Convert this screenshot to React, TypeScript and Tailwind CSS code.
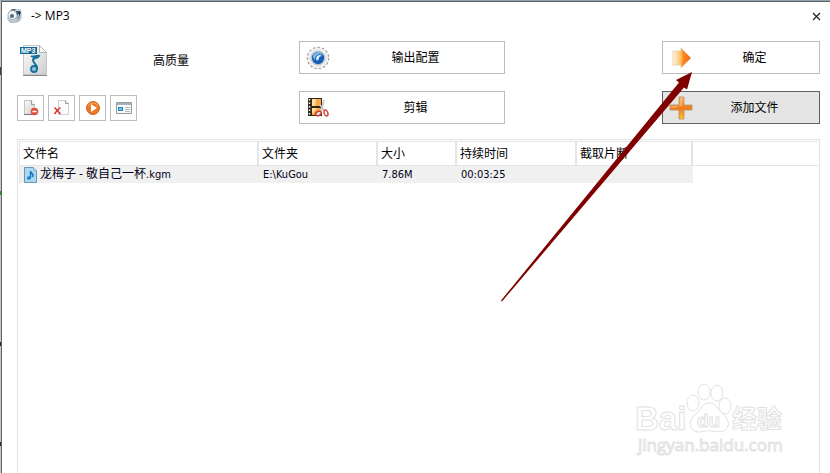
import type { ReactNode } from "react";

const files = [
  { name: "龙梅子 - 敬自己一杯", ext: ".kgm", folder: "E:\\KuGou", size: "7.86M", duration: "00:03:25", clip: "" }
];

function AppIcon() {
  return (
    <svg width="16" height="16" viewBox="0 0 16 16" aria-hidden="true">
      <path d="M0 11 2 4l4-3 8 0 1 9-2 3-4 2H3z" fill="#c3cdd5" />
      <path d="M3 3 5 1h4L7 4z" fill="#55636d" />
      <circle cx="5.500" cy="7" r="4.500" fill="#eef3f6" stroke="#8797a2" strokeWidth=".8" />
      <circle cx="5" cy="8" r="2" fill="#4a6a84" />
      <path d="M9 3h4l-1 3-2 1z" fill="#3b566b" />
      <path d="M10 9l3-3v4l-3 3z" fill="#8fa3b1" />
      <path d="m12 3 2 1-2 5z" fill="#18344c" />
      <path d="M1 12c3 3 8 3 12 0" fill="none" stroke="#a9b6bf" />
    </svg>
  );
}

function Mp3Icon() {
  return (
    <svg width="28" height="32" viewBox="0 0 28 32" aria-hidden="true">
      <defs>
        <linearGradient id="paper" x1="0" y1="0" x2="1" y2="1">
          <stop stopColor="#ffffff" />
          <stop offset="1" stopColor="#cdcdcd" />
        </linearGradient>
      </defs>
      <path d="M3.500.5h16l7 7v22h-23z" fill="url(#paper)" stroke="#c6c6c6" />
      <path d="M3 30.500h24" stroke="#8a8a8a" />
      <path d="M19.500.5v7h7z" fill="#fff" stroke="#b0b0b0" />
      <path d="M11 11c3 2 5-1 8 0-1 3-6 1-6 4 0 3 5 5 4 9" fill="none" stroke="#176f9c" strokeWidth="2" />
      <ellipse cx="14" cy="24" rx="3" ry="3" fill="#8cc5e0" stroke="#176f9c" strokeWidth="1.800" />
      <path d="M0 2h17v7H0z" fill="#0f6a98" />
      <text x="1" y="8" fill="#fff" fontSize="7" fontWeight="700" fontFamily="Liberation Sans, sans-serif">MP3</text>
    </svg>
  );
}

function RemoveIcon() {
  return (
    <svg width="18" height="18" viewBox="0 0 18 18" aria-hidden="true">
      <defs>
        <linearGradient id="sheet" x1="0" y1="0" x2="1" y2="1">
          <stop stopColor="#fafafa" />
          <stop offset="1" stopColor="#cfcfcf" />
        </linearGradient>
      </defs>
      <path d="M2.500 1.500h7l3 4v10h-10z" fill="url(#sheet)" stroke="#c4c4c4" />
      <path d="M2 15.500h9" stroke="#777" />
      <path d="M9.500 1.500v4h3" fill="#fff" stroke="#999" />
      <circle cx="12.500" cy="12.500" r="3.800" fill="#e0503f" />
      <path d="M10.500 12.500h4" stroke="#fff" strokeWidth="1.500" />
    </svg>
  );
}

function ClearIcon() {
  return (
    <svg width="18" height="18" viewBox="0 0 18 18" aria-hidden="true">
      <path d="M5.500 1.500h7l3 3v11h-10z" fill="#fdfdfd" stroke="#d0d0d0" />
      <path d="M12.500 1.500v3h3" fill="none" stroke="#999" />
      <path d="m1.500 8.500 6 6.500M7.500 8.500c-3 2-4 4-6 6.500" fill="none" stroke="#dc3329" strokeWidth="1.500" />
    </svg>
  );
}

function PlayIcon() {
  return (
    <svg width="18" height="18" viewBox="0 0 18 18" aria-hidden="true">
      <circle cx="9" cy="9" r="6.500" fill="#ee7821" stroke="#c9682a" />
      <path d="M4 7c2-4 8-4 10 0" fill="none" stroke="#ffac62" />
      <path d="m7 5 6 4-6 4z" fill="#fff" />
    </svg>
  );
}

function InfoIcon() {
  return (
    <svg width="18" height="18" viewBox="0 0 18 18" aria-hidden="true">
      <path d="M1.500 3.500h15v11h-15z" fill="#f7f8f8" stroke="#929da0" />
      <path d="M2 4h14v2H2z" fill="#a6b2b8" />
      <path d="M3 8h5v4H3z" fill="#2383bd" />
      <path d="M4 9h3v2H4z" fill="#72c8e8" />
      <path d="M10 8.500h5M10 10.500h5M10 12.500h5" stroke="#b3bdc2" />
    </svg>
  );
}

function GearIcon() {
  return (
    <svg width="24" height="24" viewBox="0 0 24 24" aria-hidden="true">
      <circle cx="12" cy="12" r="10" fill="none" stroke="#9a9a9a" strokeWidth="2.500" strokeDasharray="2.400 1.800" />
      <circle cx="12" cy="12" r="9.300" fill="#f4f4f4" stroke="#efefef" strokeWidth="2" />
      <circle cx="12" cy="12" r="7" fill="#fff" stroke="#9da5ab" strokeWidth=".8" />
      <circle cx="12" cy="12" r="6.200" fill="#175fb5" />
      <path d="M7 9c2-4 8-4 10 0-4-2-8 0-8 5-1-1-3-3-2-5z" fill="#7db4e6" />
      <path d="M10 13c0-4 4-5 6-3-2 0-3 1-3 2 0 3-3 3-3 1z" fill="#d9ecfa" />
    </svg>
  );
}

function CutIcon() {
  return (
    <svg width="24" height="24" viewBox="0 0 24 24" aria-hidden="true">
      <path d="M2 2h14v18H2z" fill="#342517" />
      <path d="M6 3h9v7H6zM6 12h9v7H6z" fill="#f5aa4c" />
      <path d="M6 3h4l-1 7H6zM6 12h5l-4 5H6z" fill="#ffe0a2" />
      <path d="M3.500 3v16" stroke="#fff" strokeWidth="1.500" strokeDasharray="1.500 2" />
      <path d="m18 4-3 12M14 9l6 7" stroke="#c6ccd0" strokeWidth="1.800" />
      <ellipse cx="12.500" cy="17.500" rx="3" ry="2" fill="#f7dfdc" stroke="#bf3e39" strokeWidth="1.500" transform="rotate(-25 12.500 17.500)" />
      <ellipse cx="20" cy="17" rx="1.800" ry="3" fill="#fff" stroke="#d33f37" strokeWidth="1.400" transform="rotate(-20 20 17)" />
    </svg>
  );
}

function GoIcon() {
  return (
    <svg width="24" height="24" viewBox="0 0 24 24" aria-hidden="true">
      <defs>
        <linearGradient id="go">
          <stop stopColor="#fff3d9" />
          <stop offset=".45" stopColor="#ffc063" />
          <stop offset=".55" stopColor="#ff9320" />
          <stop offset="1" stopColor="#f4511f" />
        </linearGradient>
      </defs>
      <path d="M4 5h8V2l10 10-10 10v-3H4z" fill="url(#go)" stroke="#e4c4a8" strokeWidth=".7" />
      <path d="M12 3l3 8-3 10 9-9z" fill="#ff7b16" opacity=".5" />
    </svg>
  );
}

function PlusIcon() {
  return (
    <svg width="24" height="24" viewBox="0 0 24 24" aria-hidden="true">
      <defs>
        <linearGradient id="plus" x1="0" y1="0" x2="0" y2="1">
          <stop stopColor="#ffb264" />
          <stop offset=".5" stopColor="#f07a18" />
          <stop offset="1" stopColor="#ffc22b" />
        </linearGradient>
      </defs>
      <path d="M10 1h5v8h8v5h-8v9h-5v-9H1V9h9z" fill="url(#plus)" stroke="#b1906a" strokeWidth=".8" />
      <path d="M11 2h3l-1 8H2v2c8 0 10-2 9-10z" fill="#ffc17b" opacity=".6" />
    </svg>
  );
}

function AudioIcon() {
  return (
    <svg width="14" height="16" viewBox="0 0 14 16" aria-hidden="true">
      <path d="M.5.5h9l3 3v12H.5z" fill="#acd7f1" stroke="#6498b9" />
      <path d="M9.500.5v3h3z" fill="#eef9ff" stroke="#87b5d1" />
      <path d="M6.500 4v7M6.500 4c0 3 4 2 2 6" fill="none" stroke="#1176bb" strokeWidth="1.500" />
      <ellipse cx="5" cy="11" rx="2" ry="1.800" fill="#1684cc" />
    </svg>
  );
}

function SmallButton({ label, children }: { label: string; children: ReactNode }) {
  return (
    <button type="button" aria-label={label} className="flex h-[26px] w-[27px] items-center justify-center border border-[#bcbcbc] bg-white">
      {children}
    </button>
  );
}

function WideButton({ label, icon, active = false }: { label: string; icon: ReactNode; active?: boolean }) {
  return (
    <button
      type="button"
      className={
        active
          ? "flex h-[33px] w-full items-center border border-[#606060] bg-[#e5e5e5] pr-[3px] pl-[6px]"
          : "flex h-[33px] w-full items-center border border-[#bcbcbc] bg-white pr-[3px] pl-[6px]"
      }
    >
      {icon}
      <span className="flex-1 text-center">{label}</span>
    </button>
  );
}

function Watermark() {
  return (
    <svg
      className="pointer-events-none absolute right-[42px] bottom-[15px]"
      width="154"
      height="76"
      viewBox="0 0 154 76"
      fill="#fff"
      stroke="#e2e2e2"
      fontFamily="Liberation Sans, Noto Sans CJK SC, sans-serif"
    >
      <text x="1" y="48" fontSize="33" fontWeight="700">Bai</text>
      <ellipse cx="59" cy="21" rx="6" ry="8" />
      <ellipse cx="70" cy="10" rx="6" ry="8" />
      <ellipse cx="83" cy="11" rx="6" ry="8" />
      <ellipse cx="91" cy="24" rx="6" ry="8" />
      <path d="M75 21c-8 0-9 9-15 13-6 5-5 15 4 16 5 0 9-2 14-1 6 1 14 2 16-5 2-8-5-11-9-16-3-4-4-7-10-7z" />
      <text x="63" y="45" fontSize="19" fontWeight="700">du</text>
      <text x="98" y="46" fontSize="25" fontWeight="700">经验</text>
      <text x="4" y="69" fontSize="17" fontFamily="Open Sans, sans-serif">jingyan.baidu.com</text>
    </svg>
  );
}

function PointerArrow() {
  return (
    <svg className="pointer-events-none absolute top-[71px] left-[501px]" width="192" height="230" viewBox="0 0 192 230" aria-hidden="true">
      <path d="M191 0 186 17.500l-3-2L1 229.500l-1-1L178 10.500l-3-2.500z" fill="#800000" />
    </svg>
  );
}

const headCell = "h-6 border-r-2 border-b border-[#e5e5e5] pl-[3px] text-left font-normal";
const bodyCell = "h-[17px] bg-[#f0f0f0] pl-1";

export default function App() {
  return (
    <div className="relative flex min-h-screen overflow-hidden border-t border-[#8fa5b1] bg-white font-['Open_Sans','Noto_Sans_CJK_SC',sans-serif] text-[12px] leading-4 text-black">
      <div className="flex w-px flex-col bg-[#c8c8c8]">
        <div className="mt-[66px] h-2 bg-[#444]" />
        <div className="mt-[116px] h-1 bg-[#229a22]" />
        <div className="mt-[147px] h-1 bg-[#26264a]" />
        <div className="mt-24 h-1 bg-[#26264a]" />
      </div>
      <main className="flex min-w-0 flex-1 flex-col border-t border-l border-[#606060]">
        <header className="flex h-[28px] items-center pr-[6px] pl-[5px]">
          <AppIcon />
          <h1 className="ml-2">-&gt; MP3</h1>
          <button type="button" aria-label="关闭" className="ml-auto flex h-4 w-4 items-center justify-center">
            <svg width="9" height="9" viewBox="0 0 9 9" aria-hidden="true">
              <path d="m1 1 7 7M8 1 1 8" stroke="#222" strokeWidth="1.200" />
            </svg>
          </button>
        </header>
        <div className="flex flex-1 flex-col pt-[11px] pr-[10px] pl-[15px]">
          <div className="flex items-start">
            <div className="w-[282px] shrink-0">
              <div className="flex h-[38px] items-center pt-px pl-[3px]">
                <Mp3Icon />
                <span className="ml-[105px]">高质量</span>
              </div>
              <div className="mt-4 flex gap-1">
                <SmallButton label="移除"><RemoveIcon /></SmallButton>
                <SmallButton label="清空"><ClearIcon /></SmallButton>
                <SmallButton label="播放"><PlayIcon /></SmallButton>
                <SmallButton label="文件信息"><InfoIcon /></SmallButton>
              </div>
            </div>
            <div className="flex w-[206px] flex-col gap-[17px]">
              <WideButton label="输出配置" icon={<GearIcon />} />
              <WideButton label="剪辑" icon={<CutIcon />} />
            </div>
            <div className="ml-auto flex w-[158px] flex-col gap-[17px]">
              <WideButton label="确定" icon={<GoIcon />} />
              <WideButton label="添加文件" icon={<PlusIcon />} active />
            </div>
          </div>
          <section className="mt-[15px] flex-1 border border-b-0 border-[#e3e3e3] pt-px pr-px pl-px">
            <table className="w-full table-fixed border-separate border-spacing-0 border-t border-l border-[#e5e5e5]">
              <colgroup>
                <col className="w-[239px]" />
                <col className="w-[119px]" />
                <col className="w-[79px]" />
                <col className="w-[120px]" />
                <col className="w-[116px]" />
                <col />
              </colgroup>
              <thead>
                <tr>
                  <th className={headCell}>文件名</th>
                  <th className={headCell}>文件夹</th>
                  <th className={headCell}>大小</th>
                  <th className={headCell}>持续时间</th>
                  <th className={headCell}>截取片断</th>
                  <td className="border-b border-[#e5e5e5]" />
                </tr>
              </thead>
              <tbody className="font-['DejaVu_Sans_Condensed','Noto_Sans','Noto_Sans_CJK_SC',sans-serif] text-[11px] text-[#000018]">
                {files.map((file) => (
                  <tr key={file.name}>
                    <td className={bodyCell}>
                      <div className="flex items-center gap-[2px]">
                        <AudioIcon />
                        <span>
                          <span className="font-['Open_Sans','Noto_Sans_CJK_SC',sans-serif] text-[12px]">{file.name}</span>
                          {file.ext}
                        </span>
                      </div>
                    </td>
                    <td className={bodyCell}>{file.folder}</td>
                    <td className={bodyCell}>{file.size}</td>
                    <td className={bodyCell}>{file.duration}</td>
                    <td className={bodyCell}>{file.clip}</td>
                    <td />
                  </tr>
                ))}
              </tbody>
            </table>
          </section>
        </div>
      </main>
      <Watermark />
      <PointerArrow />
    </div>
  );
}
